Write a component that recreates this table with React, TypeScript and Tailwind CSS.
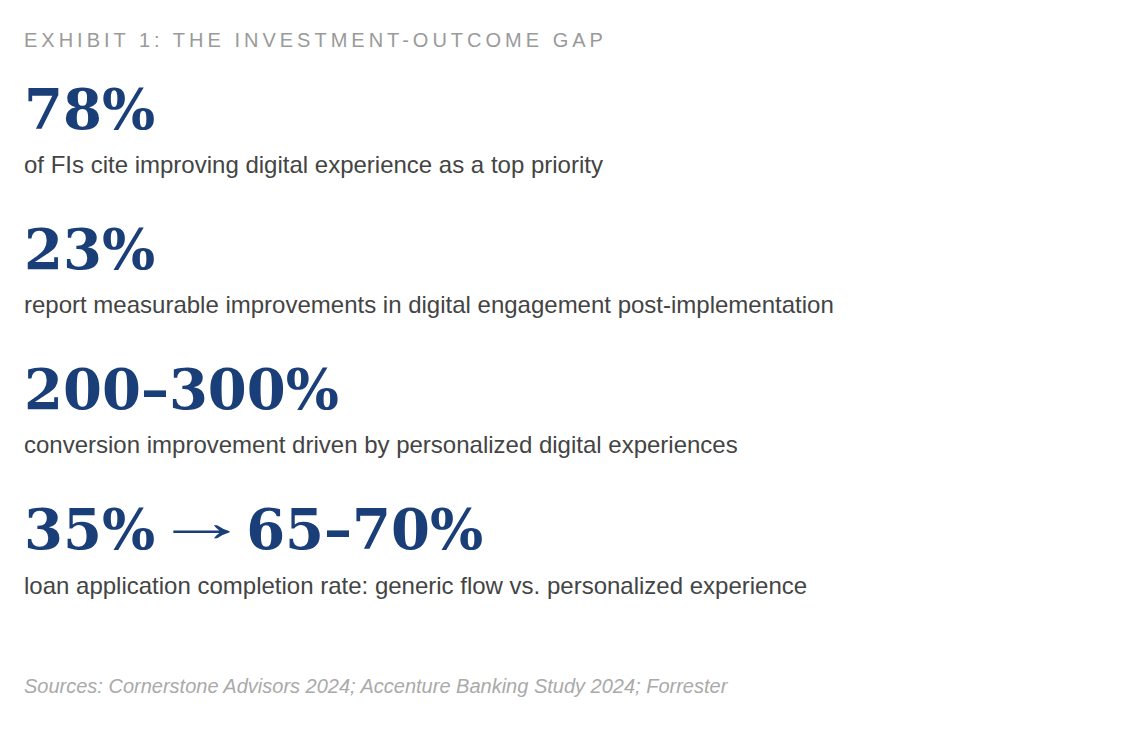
const stats = [
  {
    value: "78%",
    label: "of FIs cite improving digital experience as a top priority",
  },
  {
    value: "23%",
    label: "report measurable improvements in digital engagement post-implementation",
  },
  {
    value: "200–300%",
    label: "conversion improvement driven by personalized digital experiences",
  },
];

const App = () => {
  return (
    <div className="min-h-screen w-full bg-white pl-6 pt-7 font-['Liberation_Sans',Arial,sans-serif]">
      {/* Exhibit title */}
      <h2 className="text-[20px] leading-6 tracking-[0.2em] text-[#9a9a9a] uppercase">
        Exhibit 1: The Investment-Outcome Gap
      </h2>

      <div className="mt-[29px] flex flex-col gap-[42px]">
        {stats.map((s) => (
          <div key={s.value} className="flex flex-col gap-[14px]">
            <div className="font-['DejaVu_Serif',Georgia,serif] text-[56px] leading-[56px] font-bold text-[#1a3e78]">
              {s.value}
            </div>
            <p className="text-[24px] leading-7 text-[#444444]">{s.label}</p>
          </div>
        ))}

        <div className="flex flex-col gap-[14px]">
          <div className="font-['DejaVu_Serif',Georgia,serif] text-[56px] leading-[56px] font-bold text-[#1a3e78] whitespace-nowrap">
            35%
            <span className="inline-block w-[67px] ml-[12px] mr-[12px] text-center font-normal font-['Liberation_Serif',serif]">
              <span className="inline-block scale-x-[1.7] -translate-y-[8px]">→</span>
            </span>
            65–70%
          </div>
          <p className="text-[24px] leading-7 text-[#444444]">
            loan application completion rate: generic flow vs. personalized experience
          </p>
        </div>
      </div>

      {/* Footnote */}
      <p className="mt-[74px] text-[20px] leading-6 italic text-[#aaaaaa]">
        Sources: Cornerstone Advisors 2024; Accenture Banking Study 2024; Forrester
      </p>
    </div>
  );
};

export default App;
